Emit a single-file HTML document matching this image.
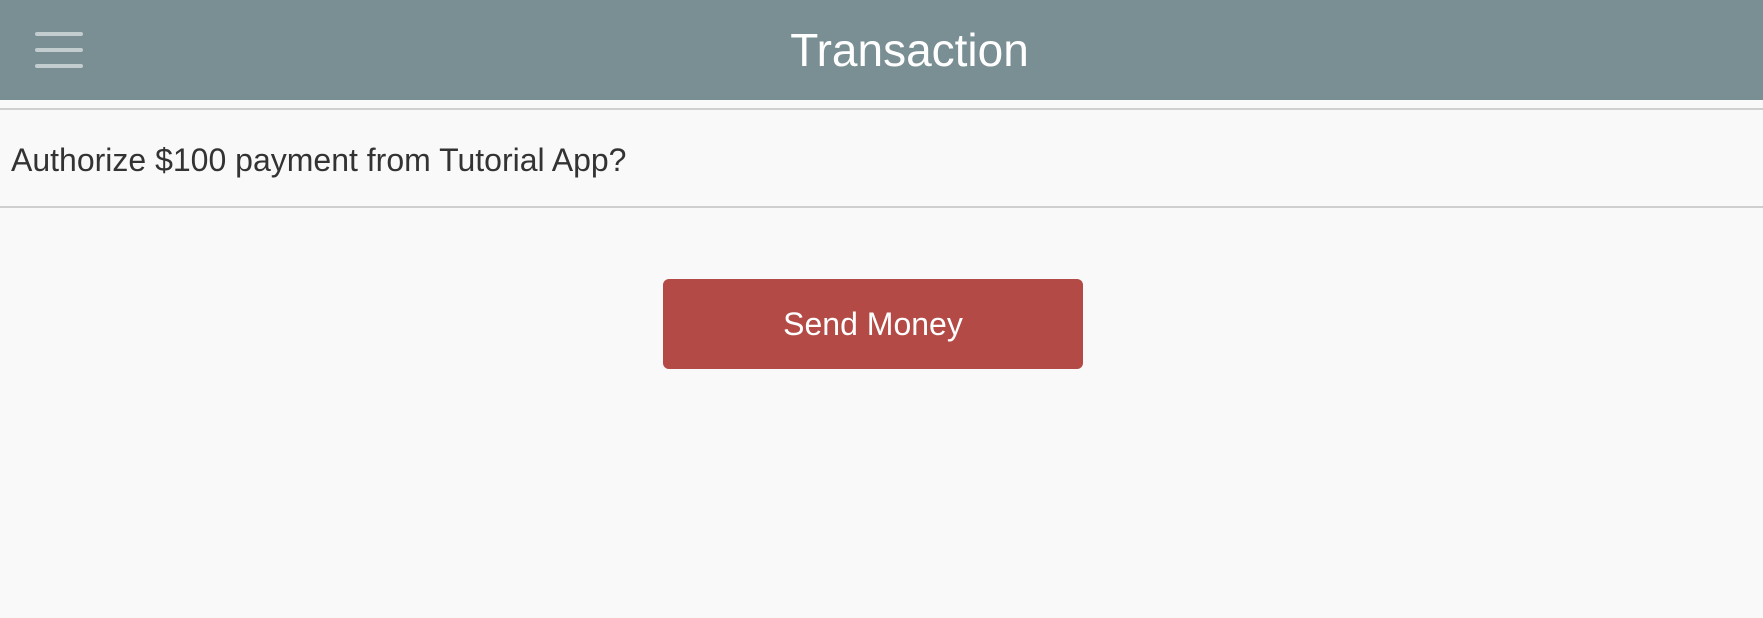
<!DOCTYPE html>
<html><head><style>
html,body{margin:0;padding:0;width:1763px;height:618px;overflow:hidden;background:#f9f9f9;font-family:"Liberation Sans",Helvetica,Arial,sans-serif;}
.hdr{position:absolute;left:0;top:0;width:1763px;height:100px;background:#7a8f93;}
.hdr .t{position:absolute;left:0;width:1763px;top:0;height:100px;line-height:100px;text-align:center;color:#fff;font-size:46px;padding-left:56px;box-sizing:border-box;}
.bar{position:absolute;left:35px;width:48px;height:4px;border-radius:2px;background:#c3ccce;}
.l1{position:absolute;left:0;top:108px;width:1763px;height:2px;background:#cfcfcf;}
.l2{position:absolute;left:0;top:206px;width:1763px;height:2px;background:#cfcfcf;}
.msg{position:absolute;left:11px;top:142px;font-size:32px;color:#333;white-space:nowrap;}
.btn{position:absolute;left:663px;top:279px;width:420px;height:90px;background:#b34a46;border-radius:6px;color:#fff;font-size:32px;line-height:90px;text-align:center;}
</style></head><body>
<div class="hdr">
<div class="bar" style="top:32px"></div>
<div class="bar" style="top:48px"></div>
<div class="bar" style="top:64px"></div>
<div class="t">Transaction</div>
</div>
<div class="l1"></div>
<div class="msg">Authorize $100 payment from Tutorial App?</div>
<div class="l2"></div>
<div class="btn">Send Money</div>
</body></html>
